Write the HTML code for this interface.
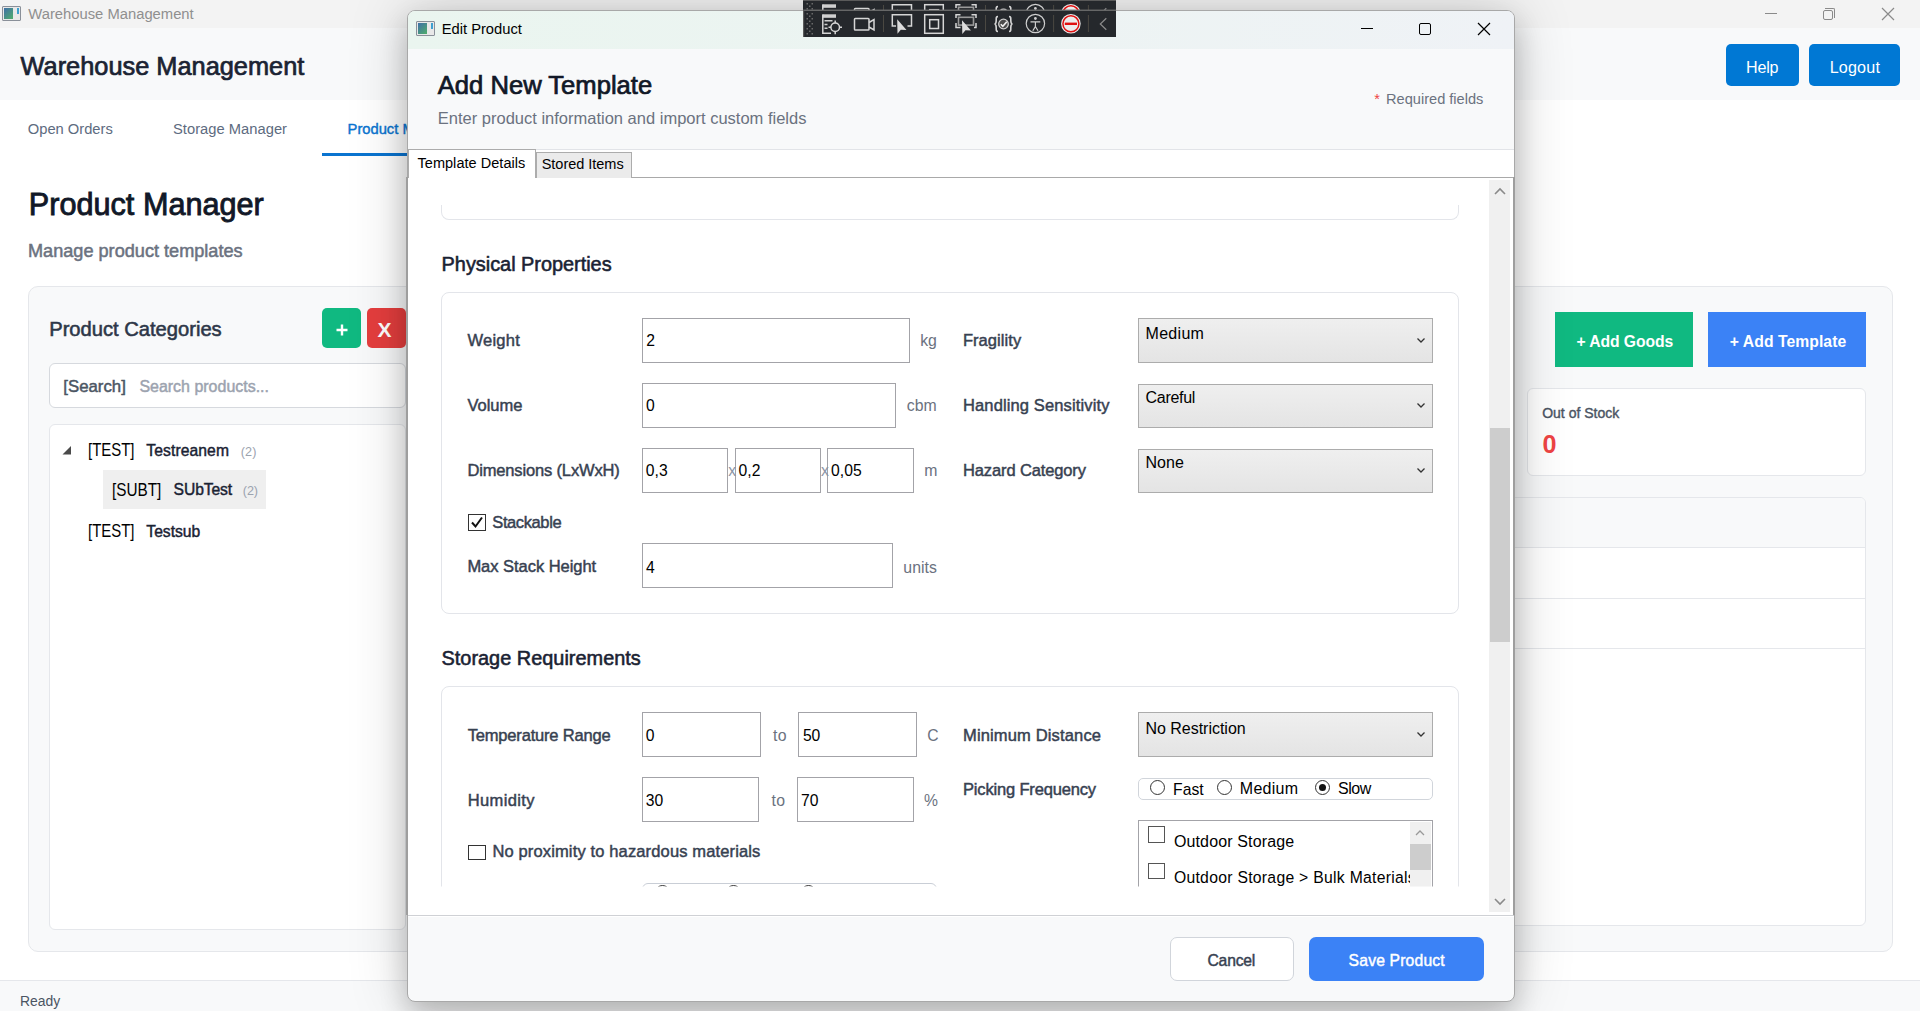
<!DOCTYPE html>
<html><head><meta charset="utf-8">
<style>
*{box-sizing:border-box;margin:0;padding:0}
html,body{width:1920px;height:1011px;overflow:hidden;background:#fff;font-family:"Liberation Sans",sans-serif;position:relative}
.abs{position:absolute}
.tx{position:absolute;white-space:nowrap;line-height:1;font-family:"Liberation Sans",sans-serif}
.inp{position:absolute;background:#fff;border:1px solid #a3a3a8}
.sel{position:absolute;background:linear-gradient(#efefef,#e4e4e4);border:1px solid #acacac}
.chev{position:absolute;width:6px;height:6px;border-right:1.3px solid #444;border-bottom:1.3px solid #444;transform:rotate(45deg)}
.card{position:absolute;background:#fff;border:1px solid #e3e5ea;border-radius:8px}
.cb{position:absolute;width:18px;height:17px;border:1px solid #333;background:#fff}
.rad{position:absolute;width:15px;height:15px;border:1px solid #333;border-radius:50%;background:#fff}
.tbicon{position:absolute}
</style></head><body>
<!-- ===== MAIN WINDOW ===== -->
<div class="abs" style="left:0;top:0;width:1920px;height:28px;background:#f3f3f3"></div>
<!-- app icon -->
<div class="abs" style="left:2px;top:6px;width:19px;height:15px;border:1px solid #8a9099;border-radius:1px;background:#e8e8e8"></div>
<div class="abs" style="left:4px;top:8px;width:9px;height:11px;background:linear-gradient(135deg,#3f6fa8,#4fae6a)"></div>
<div class="abs" style="left:17px;top:8px;width:2px;height:6px;background:#3da0d0"></div>
<!-- window controls -->
<div class="abs" style="left:1765px;top:13px;width:12px;height:1px;background:#8a8a8a"></div>
<div class="abs" style="left:1823px;top:10px;width:10px;height:10px;border:1.2px solid #8a8a8a;border-radius:2px"></div>
<div class="abs" style="left:1825px;top:8px;width:10px;height:10px;border-top:1.2px solid #8a8a8a;border-right:1.2px solid #8a8a8a;border-radius:0 2px 0 0"></div>
<svg class="abs" style="left:1881px;top:7px" width="14" height="14"><path d="M1 1L13 13M13 1L1 13" stroke="#8a8a8a" stroke-width="1.2"/></svg>

<div class="abs" style="left:0;top:28px;width:1920px;height:72px;background:#f8f9fa"></div>
<div class="abs" style="left:1725.5px;top:44px;width:73.5px;height:41.5px;background:#0078d4;border-radius:5px"></div>
<div class="abs" style="left:1809px;top:44px;width:91px;height:41.5px;background:#0078d4;border-radius:5px"></div>
<!-- nav underline -->
<div class="abs" style="left:322px;top:152.5px;width:200px;height:3.5px;background:#0a74d0"></div>

<!-- big panel -->
<div class="abs" style="left:28px;top:286px;width:1864.5px;height:666px;background:#f8f9fa;border:1px solid #e5e7eb;border-radius:10px"></div>
<div class="abs" style="left:321.5px;top:307.5px;width:39.5px;height:40px;background:#10b981;border-radius:5px"></div>
<div class="abs" style="left:366.5px;top:307.5px;width:39.5px;height:40px;background:#e53e3e;border-radius:5px"></div>
<div class="abs" style="left:49px;top:363px;width:357px;height:44.5px;background:#fff;border:1px solid #d6d9de;border-radius:6px"></div>
<div class="abs" style="left:49px;top:423.5px;width:357px;height:506.5px;background:#fff;border:1px solid #e5e7eb;border-radius:6px"></div>
<div class="abs" style="left:103px;top:470px;width:163px;height:38.5px;background:#efefef"></div>
<svg class="abs" style="left:62px;top:446px" width="10" height="9"><path d="M9 0L9 8.5L0.5 8.5Z" fill="#4a4a4a"/></svg>
<svg class="abs" style="left:331.5px;top:319.75px" width="20" height="20"><path d="M10 4.5V15.5M4.5 10H15.5" stroke="#fff" stroke-width="2.4"/></svg>
<div class="tx" style="left:377.5px;top:319px;font-size:21px;font-weight:bold;color:#fff;">X</div>

<!-- right side -->
<div class="abs" style="left:1555px;top:312px;width:138px;height:54.5px;background:#10b981"></div>
<div class="abs" style="left:1708px;top:312px;width:158px;height:54.5px;background:#3b82f6"></div>
<div class="abs" style="left:1526.5px;top:387.5px;width:339.5px;height:88px;background:#fff;border:1px solid #e5e7eb;border-radius:6px"></div>
<div class="abs" style="left:1300px;top:496.5px;width:566px;height:429px;background:#fff;border:1px solid #e5e7eb;border-radius:6px;overflow:hidden">
  <div class="abs" style="left:0;top:0;width:100%;height:50.5px;background:#f8f9fa;border-bottom:1px solid #e5e7eb"></div>
  <div class="abs" style="left:0;top:100px;width:100%;height:1px;background:#e5e7eb"></div>
  <div class="abs" style="left:0;top:150px;width:100%;height:1px;background:#e5e7eb"></div>
</div>

<!-- status bar -->
<div class="abs" style="left:0;top:980px;width:1920px;height:31px;background:#f8f9fa;border-top:1px solid #e5e7eb"></div>

<span class="tx" id="tb_title" style="left:28.30px;top:7.43px;font-size:14.79px;color:#8f8f8f;letter-spacing:-0.002px;">Warehouse Management</span>
<span class="tx" id="hdr_title" style="left:20.60px;top:53.54px;font-size:25.36px;color:#1b2333;-webkit-text-stroke:0.71px #1b2333;letter-spacing:-0.006px;">Warehouse Management</span>
<span class="tx" id="help" style="left:1746.00px;top:59.11px;font-size:16.11px;color:#ffffff;letter-spacing:-0.214px;">Help</span>
<span class="tx" id="logout" style="left:1829.70px;top:59.11px;font-size:16.11px;color:#ffffff;letter-spacing:0.184px;">Logout</span>
<span class="tx" id="nav1" style="left:27.80px;top:121.68px;font-size:14.73px;color:#5d6b80;letter-spacing:-0.009px;">Open Orders</span>
<span class="tx" id="nav2" style="left:173.00px;top:121.68px;font-size:14.73px;color:#5d6b80;letter-spacing:0.019px;">Storage Manager</span>
<span class="tx" id="nav3" style="left:347.60px;top:121.68px;font-size:14.73px;color:#0a74d0;-webkit-text-stroke:0.41px #0a74d0;">Product Manager</span>
<span class="tx" id="pm_title" style="left:28.80px;top:189.26px;font-size:30.64px;color:#111827;-webkit-text-stroke:0.86px #111827;letter-spacing:0.006px;">Product Manager</span>
<span class="tx" id="pm_sub" style="left:28.00px;top:241.58px;font-size:18.14px;color:#6b7280;-webkit-text-stroke:0.51px #6b7280;">Manage product templates</span>
<span class="tx" id="pc_title" style="left:49.20px;top:319.11px;font-size:20.16px;color:#2d3748;-webkit-text-stroke:0.56px #2d3748;letter-spacing:-0.003px;">Product Categories</span>
<span class="tx" id="srch1" style="left:63.30px;top:378.73px;font-size:16.79px;color:#4b5563;-webkit-text-stroke:0.47px #4b5563;">[Search]</span>
<span class="tx" id="srch2" style="left:139.40px;top:379.42px;font-size:15.98px;color:#9ca3af;-webkit-text-stroke:0.45px #9ca3af;">Search products...</span>
<span class="tx" id="tr1a" style="left:87.50px;top:441.40px;font-size:18.00px;color:#000000;transform:scaleX(0.83);transform-origin:0 0;">[TEST]</span>
<span class="tx" id="tr1b" style="left:146.30px;top:442.67px;font-size:15.68px;color:#1a2233;-webkit-text-stroke:0.44px #1a2233;letter-spacing:0.090px;">Testreanem</span>
<span class="tx" id="tr1c" style="left:240.70px;top:446.26px;font-size:12.63px;color:#9ca3af;letter-spacing:0.131px;">(2)</span>
<span class="tx" id="tr2a" style="left:111.50px;top:480.70px;font-size:18.00px;color:#000000;transform:scaleX(0.85);transform-origin:0 0;">[SUBT]</span>
<span class="tx" id="tr2b" style="left:173.60px;top:482.17px;font-size:15.68px;color:#1a2233;-webkit-text-stroke:0.44px #1a2233;letter-spacing:-0.106px;">SUbTest</span>
<span class="tx" id="tr2c" style="left:242.80px;top:485.26px;font-size:12.63px;color:#9ca3af;letter-spacing:-0.119px;">(2)</span>
<span class="tx" id="tr3a" style="left:87.50px;top:522.40px;font-size:18.00px;color:#000000;transform:scaleX(0.83);transform-origin:0 0;">[TEST]</span>
<span class="tx" id="tr3b" style="left:146.30px;top:523.67px;font-size:15.68px;color:#1a2233;-webkit-text-stroke:0.44px #1a2233;letter-spacing:-0.003px;">Testsub</span>
<span class="tx" id="addg" style="left:1576.40px;top:334.15px;font-size:15.71px;color:#ffffff;font-weight:bold;letter-spacing:-0.076px;">+ Add Goods</span>
<span class="tx" id="addt" style="left:1729.80px;top:334.15px;font-size:15.71px;color:#ffffff;font-weight:bold;letter-spacing:0.060px;">+ Add Template</span>
<span class="tx" id="oos" style="left:1542.20px;top:406.30px;font-size:14.00px;color:#4b5563;-webkit-text-stroke:0.39px #4b5563;letter-spacing:-0.004px;">Out of Stock</span>
<span class="tx" id="oos0" style="left:1542.50px;top:432.28px;font-size:25.20px;color:#ef4444;font-weight:bold;">0</span>
<span class="tx" id="ready" style="left:20.00px;top:994.88px;font-size:13.91px;color:#4b5563;letter-spacing:-0.001px;">Ready</span>

<!-- ===== DIALOG ===== -->
<div class="abs" id="dlg" style="left:407px;top:10px;width:1108px;height:991.5px;border-radius:8px;background:#f8f9fa;border:1px solid #a8a8a8;box-shadow:0 0 60px rgba(0,0,0,0.19), 0 14px 28px rgba(0,0,0,0.2);overflow:hidden">
  <div class="abs" style="left:0;top:0;width:100%;height:38px;background:linear-gradient(90deg,#eaf5ef 0%,#ecf4f2 45%,#eff2f6 100%)"></div>
  <div class="abs" style="left:0;top:138px;width:100%;height:1px;background:#e2e4e8"></div>
  <div class="abs" style="left:0;top:139px;width:100%;height:766.5px;background:#fff"></div>
  <div class="abs" style="left:0;top:904.3px;width:100%;height:1.2px;background:#cfd1d5"></div>
</div>
<!-- dialog app icon -->
<div class="abs" style="left:416px;top:21px;width:19px;height:15px;border:1px solid #8a9099;border-radius:1px;background:#e8e8e8"></div>
<div class="abs" style="left:418px;top:23px;width:9px;height:11px;background:linear-gradient(135deg,#3f6fa8,#4fae6a)"></div>
<div class="abs" style="left:431px;top:23px;width:2px;height:6px;background:#3da0d0"></div>
<!-- dialog controls -->
<div class="abs" style="left:1361px;top:28px;width:12px;height:1.2px;background:#000"></div>
<div class="abs" style="left:1419px;top:23px;width:12px;height:12px;border:1.2px solid #000;border-radius:2px"></div>
<svg class="abs" style="left:1477px;top:22px" width="14" height="14"><path d="M1 1L13 13M13 1L1 13" stroke="#000" stroke-width="1.2"/></svg>

<!-- tabs -->
<div class="abs" style="left:631px;top:176.5px;width:884px;height:1.5px;background:#a9a9a9"></div>
<div class="abs" style="left:535.5px;top:152px;width:96px;height:25.5px;background:#ebebeb;border:1px solid #acacac;border-bottom:none"></div>
<div class="abs" style="left:407.5px;top:149px;width:128px;height:29px;background:#fff;border:1px solid #acacac;border-bottom:none"></div>
<!-- content borders -->
<div class="abs" style="left:406.3px;top:177px;width:1.8px;height:738px;background:#9e9e9e"></div>
<div class="abs" style="left:1513.2px;top:177px;width:1.8px;height:738px;background:#9e9e9e"></div>

<!-- scrollbar -->
<div class="abs" style="left:1489px;top:180px;width:21px;height:731.5px;background:#f0f0f0"></div>
<div class="abs" style="left:1490px;top:428px;width:20px;height:214px;background:#cdcdcd"></div>
<svg class="abs" style="left:1493px;top:186px" width="14" height="10"><path d="M2 8L7 3L12 8" stroke="#8a8a8a" stroke-width="1.6" fill="none"/></svg>
<svg class="abs" style="left:1493px;top:897px" width="14" height="10"><path d="M2 2L7 7L12 2" stroke="#8a8a8a" stroke-width="1.6" fill="none"/></svg>

<!-- scroll content (clipped) -->
<div class="abs" style="left:0;top:0;width:1920px;height:1011px;clip-path:inset(178px 431px 124.5px 408px)">
  <div class="card" style="left:441px;top:205px;width:1018px;height:15px;border-top:none;border-radius:0 0 8px 8px"></div>
  <div class="card" style="left:441px;top:292px;width:1018px;height:322px"></div>
  <div class="card" style="left:441px;top:686px;width:1018px;height:300px"></div>
  <!-- physical inputs -->
  <div class="inp" style="left:642px;top:318px;width:267.5px;height:44.5px"></div>
  <div class="inp" style="left:642px;top:383px;width:253.5px;height:44.5px"></div>
  <div class="inp" style="left:642px;top:448px;width:86px;height:44.5px"></div>
  <div class="inp" style="left:735px;top:448px;width:86px;height:44.5px"></div>
  <div class="inp" style="left:827px;top:448px;width:86.5px;height:44.5px"></div>
  <div class="inp" style="left:642px;top:543px;width:250.5px;height:44.5px"></div>
  <div class="sel" style="left:1138px;top:318px;width:294.5px;height:44.5px"></div>
  <div class="sel" style="left:1138px;top:383.5px;width:294.5px;height:44.5px"></div>
  <div class="sel" style="left:1138px;top:448.5px;width:294.5px;height:44.5px"></div>
  <svg class="abs" style="left:1416px;top:337px" width="10" height="7"><path d="M1.5 1.5L5 5L8.5 1.5" stroke="#333" stroke-width="1.3" fill="none"/></svg>
  <svg class="abs" style="left:1416px;top:402px" width="10" height="7"><path d="M1.5 1.5L5 5L8.5 1.5" stroke="#333" stroke-width="1.3" fill="none"/></svg>
  <svg class="abs" style="left:1416px;top:467px" width="10" height="7"><path d="M1.5 1.5L5 5L8.5 1.5" stroke="#333" stroke-width="1.3" fill="none"/></svg>
  <div class="cb" style="left:468px;top:514px"></div>
  <svg class="abs" style="left:468px;top:514px" width="18" height="17"><path d="M4 8.5L7.5 12.5L14 3.5" stroke="#111" stroke-width="2" fill="none"/></svg>
  <!-- storage -->
  <div class="inp" style="left:642px;top:712px;width:118.5px;height:44.5px"></div>
  <div class="inp" style="left:798px;top:712px;width:118.5px;height:44.5px"></div>
  <div class="inp" style="left:642px;top:777px;width:116.5px;height:44.5px"></div>
  <div class="inp" style="left:797px;top:777px;width:116.5px;height:44.5px"></div>
  <div class="cb" style="left:468px;top:844.5px;width:17.5px;height:15px"></div>
  <div class="abs" style="left:642px;top:882.7px;width:295px;height:30px;border:1px solid #c9ced6;border-radius:6px;background:#fff"></div>
  <div class="rad" style="left:654.5px;top:884.8px"></div>
  <div class="rad" style="left:726px;top:884.8px"></div>
  <div class="rad" style="left:801px;top:884.8px"></div>
  <div class="sel" style="left:1138px;top:712px;width:294.5px;height:44.5px"></div>
  <svg class="abs" style="left:1416px;top:731px" width="10" height="7"><path d="M1.5 1.5L5 5L8.5 1.5" stroke="#333" stroke-width="1.3" fill="none"/></svg>
  <div class="abs" style="left:1138px;top:777.5px;width:294.5px;height:22px;border:1px solid #d1d5db;border-radius:5px;background:#fff"></div>
  <div class="rad" style="left:1150px;top:780px"></div>
  <div class="rad" style="left:1217px;top:780px"></div>
  <div class="rad" style="left:1315px;top:780px"></div>
  <div class="abs" style="left:1319px;top:784px;width:7px;height:7px;border-radius:50%;background:#111"></div>
  <div class="abs" style="left:1138px;top:820px;width:294.5px;height:120px;border:1px solid #a3a3a8;background:#fff"></div>
  <div class="abs" style="left:1410px;top:822px;width:21px;height:110px;background:#f0f0f0"></div>
  <div class="abs" style="left:1410px;top:844px;width:21px;height:26px;background:#cdcdcd"></div>
  <svg class="abs" style="left:1414px;top:829px" width="12" height="8"><path d="M2 6L6 2L10 6" stroke="#999" stroke-width="1.3" fill="none"/></svg>
  <div class="cb" style="left:1148px;top:826px;width:17px;height:16.5px;border-color:#555"></div>
  <div class="cb" style="left:1148px;top:863px;width:17px;height:16px;border-color:#555"></div>
<span class="tx" id="sec1" style="left:441.60px;top:255.09px;font-size:19.90px;color:#1a2233;-webkit-text-stroke:0.56px #1a2233;letter-spacing:-0.014px;">Physical Properties</span>
<span class="tx" id="l_weight" style="left:467.40px;top:332.76px;font-size:16.52px;color:#374151;-webkit-text-stroke:0.46px #374151;letter-spacing:0.278px;">Weight</span>
<span class="tx" id="l_volume" style="left:467.40px;top:397.76px;font-size:16.52px;color:#374151;-webkit-text-stroke:0.46px #374151;letter-spacing:-0.019px;">Volume</span>
<span class="tx" id="l_dim" style="left:467.40px;top:462.76px;font-size:16.52px;color:#374151;-webkit-text-stroke:0.46px #374151;letter-spacing:-0.158px;">Dimensions (LxWxH)</span>
<span class="tx" id="l_stack" style="left:492.30px;top:515.26px;font-size:16.52px;color:#374151;-webkit-text-stroke:0.46px #374151;letter-spacing:-0.404px;">Stackable</span>
<span class="tx" id="l_msh" style="left:467.40px;top:559.16px;font-size:16.52px;color:#374151;-webkit-text-stroke:0.46px #374151;letter-spacing:-0.042px;">Max Stack Height</span>
<span class="tx" id="l_frag" style="left:962.90px;top:333.46px;font-size:16.52px;color:#374151;-webkit-text-stroke:0.46px #374151;letter-spacing:0.059px;">Fragility</span>
<span class="tx" id="l_hand" style="left:963.00px;top:398.36px;font-size:16.52px;color:#374151;-webkit-text-stroke:0.46px #374151;letter-spacing:0.120px;">Handling Sensitivity</span>
<span class="tx" id="l_haz" style="left:963.00px;top:463.06px;font-size:16.52px;color:#374151;-webkit-text-stroke:0.46px #374151;letter-spacing:-0.132px;">Hazard Category</span>
<span class="tx" id="v_w" style="left:646.30px;top:333.46px;font-size:15.70px;color:#000;">2</span>
<span class="tx" id="v_v" style="left:646.00px;top:398.46px;font-size:15.70px;color:#000;">0</span>
<span class="tx" id="v_d1" style="left:645.80px;top:463.46px;font-size:15.70px;color:#000;">0,3</span>
<span class="tx" id="v_d2" style="left:738.60px;top:463.46px;font-size:15.70px;color:#000;">0,2</span>
<span class="tx" id="v_d3" style="left:831.10px;top:463.46px;font-size:15.70px;color:#000;">0,05</span>
<span class="tx" id="v_msh" style="left:646.00px;top:559.65px;font-size:15.70px;color:#000;">4</span>
<span class="tx" id="u_kg" style="left:920.20px;top:333.34px;font-size:15.83px;color:#6b7280;letter-spacing:-0.119px;">kg</span>
<span class="tx" id="u_cbm" style="left:906.70px;top:398.34px;font-size:15.83px;color:#6b7280;letter-spacing:0.047px;">cbm</span>
<span class="tx" id="u_m" style="left:924.30px;top:462.94px;font-size:15.83px;color:#6b7280;">m</span>
<span class="tx" id="u_units" style="left:903.30px;top:559.54px;font-size:15.83px;color:#6b7280;letter-spacing:0.066px;">units</span>
<span class="tx" id="x1" style="left:728.30px;top:463.46px;font-size:15.70px;color:#8a94a6;">x</span>
<span class="tx" id="x2" style="left:821.00px;top:463.46px;font-size:15.70px;color:#8a94a6;">x</span>
<span class="tx" id="s_med" style="left:1145.50px;top:326.00px;font-size:16.00px;color:#000;letter-spacing:0.299px;">Medium</span>
<span class="tx" id="s_car" style="left:1145.50px;top:390.30px;font-size:16.00px;color:#000;letter-spacing:-0.280px;">Careful</span>
<span class="tx" id="s_non" style="left:1145.50px;top:455.20px;font-size:16.00px;color:#000;letter-spacing:0.050px;">None</span>
<span class="tx" id="sec2" style="left:441.50px;top:648.88px;font-size:19.90px;color:#1a2233;-webkit-text-stroke:0.56px #1a2233;letter-spacing:0.015px;">Storage Requirements</span>
<span class="tx" id="l_temp" style="left:467.70px;top:727.66px;font-size:16.52px;color:#374151;-webkit-text-stroke:0.46px #374151;letter-spacing:-0.187px;">Temperature Range</span>
<span class="tx" id="l_hum" style="left:467.70px;top:792.76px;font-size:16.52px;color:#374151;-webkit-text-stroke:0.46px #374151;letter-spacing:0.379px;">Humidity</span>
<span class="tx" id="v_t0" style="left:645.80px;top:728.36px;font-size:15.70px;color:#000;">0</span>
<span class="tx" id="v_t50" style="left:802.90px;top:728.36px;font-size:15.70px;color:#000;">50</span>
<span class="tx" id="v_h30" style="left:645.80px;top:793.45px;font-size:15.70px;color:#000;">30</span>
<span class="tx" id="v_h70" style="left:801.00px;top:793.45px;font-size:15.70px;color:#000;">70</span>
<span class="tx" id="u_to1" style="left:773.00px;top:728.04px;font-size:15.83px;color:#6b7280;letter-spacing:0.297px;">to</span>
<span class="tx" id="u_to2" style="left:771.60px;top:793.04px;font-size:15.83px;color:#6b7280;letter-spacing:0.297px;">to</span>
<span class="tx" id="u_c" style="left:927.30px;top:728.36px;font-size:15.70px;color:#6b7280;">C</span>
<span class="tx" id="u_pct" style="left:924.00px;top:793.45px;font-size:15.70px;color:#6b7280;">%</span>
<span class="tx" id="l_prox" style="left:492.40px;top:844.26px;font-size:16.52px;color:#374151;-webkit-text-stroke:0.46px #374151;letter-spacing:0.134px;">No proximity to hazardous materials</span>
<span class="tx" id="l_mind" style="left:963.00px;top:727.86px;font-size:16.52px;color:#374151;-webkit-text-stroke:0.46px #374151;letter-spacing:0.145px;">Minimum Distance</span>
<span class="tx" id="l_pick" style="left:963.00px;top:782.26px;font-size:16.52px;color:#374151;-webkit-text-stroke:0.46px #374151;letter-spacing:-0.179px;">Picking Frequency</span>
<span class="tx" id="s_nores" style="left:1145.40px;top:721.00px;font-size:16.00px;color:#000;letter-spacing:-0.014px;">No Restriction</span>
<span class="tx" id="r_fast" style="left:1173.10px;top:781.65px;font-size:15.70px;color:#000;">Fast</span>
<span class="tx" id="r_med" style="left:1239.80px;top:781.40px;font-size:16.00px;color:#000;letter-spacing:0.259px;">Medium</span>
<span class="tx" id="r_slow" style="left:1338.00px;top:781.40px;font-size:16.00px;color:#000;letter-spacing:-0.463px;">Slow</span>
<span class="tx" id="li1" style="left:1173.90px;top:833.80px;font-size:16.00px;color:#000;letter-spacing:0.143px;">Outdoor Storage</span>
<span class="tx" id="li2" style="left:1173.90px;top:869.62px;font-size:15.74px;color:#000;width:236px;overflow:hidden;height:20px;letter-spacing:0.283px;">Outdoor Storage &gt; Bulk Materials</span>
</div>

<!-- footer buttons -->
<div class="abs" style="left:1169.5px;top:937px;width:124px;height:43.5px;background:#fff;border:1px solid #d1d5db;border-radius:7px"></div>
<div class="abs" style="left:1309px;top:937px;width:175px;height:43.5px;background:#3b82f6;border-radius:7px"></div>

<span class="tx" id="dlg_title" style="left:441.70px;top:22.48px;font-size:14.73px;color:#000000;letter-spacing:0.001px;">Edit Product</span>
<span class="tx" id="dlg_h1" style="left:437.80px;top:73.23px;font-size:25.61px;color:#111827;-webkit-text-stroke:0.72px #111827;letter-spacing:-0.006px;">Add New Template</span>
<span class="tx" id="dlg_sub" style="left:437.80px;top:109.97px;font-size:16.51px;color:#6b7280;letter-spacing:-0.001px;">Enter product information and import custom fields</span>
<span class="tx" id="req_star" style="left:1374.20px;top:91.59px;font-size:14.60px;color:#ef4444;">*</span>
<span class="tx" id="req" style="left:1386.00px;top:91.59px;font-size:14.60px;color:#6b7280;letter-spacing:0.003px;">Required fields</span>
<span class="tx" id="tab1" style="left:417.50px;top:156.35px;font-size:14.53px;color:#000000;letter-spacing:0.032px;">Template Details</span>
<span class="tx" id="tab2" style="left:541.70px;top:157.45px;font-size:14.53px;color:#000000;letter-spacing:-0.027px;">Stored Items</span>
<span class="tx" id="cancel" style="left:1207.50px;top:952.76px;font-size:15.69px;color:#374151;-webkit-text-stroke:0.44px #374151;letter-spacing:-0.209px;">Cancel</span>
<span class="tx" id="save" style="left:1348.60px;top:952.76px;font-size:15.69px;color:#ffffff;-webkit-text-stroke:0.44px #ffffff;letter-spacing:0.174px;">Save Product</span>

<!-- ===== XAML TOOLBAR ===== -->
<div class="abs" style="left:803px;top:0;width:313px;height:36.5px;background:#25282c;overflow:hidden" id="tb">
  <svg class="abs" style="left:0;top:0" width="313" height="37">
    <defs><g id="tbg" fill="none" stroke="#d6d6d6" stroke-width="1.5">
  <!-- grip dots -->
  <g fill="#6a6a6a" stroke="none">
    <rect x="3.5" y="13" width="1.5" height="1.5"/><rect x="8.5" y="13" width="1.5" height="1.5"/>
    <rect x="6" y="15.5" width="1.5" height="1.5"/>
    <rect x="3.5" y="18" width="1.5" height="1.5"/><rect x="8.5" y="18" width="1.5" height="1.5"/>
    <rect x="6" y="20.5" width="1.5" height="1.5"/>
    <rect x="3.5" y="23" width="1.5" height="1.5"/><rect x="8.5" y="23" width="1.5" height="1.5"/>
    <rect x="6" y="25.5" width="1.5" height="1.5"/>
    <rect x="3.5" y="28" width="1.5" height="1.5"/><rect x="8.5" y="28" width="1.5" height="1.5"/>
    <rect x="6" y="30.5" width="1.5" height="1.5"/>
    <rect x="3.5" y="33" width="1.5" height="1.5"/><rect x="8.5" y="33" width="1.5" height="1.5"/>
  </g>
  <!-- icon1: tree w/ crosshair (origin 822,14) -->
  <rect x="19.5" y="14.3" width="13.5" height="3.5" fill="#d0d0d0" stroke="none"/>
  <path d="M19.8 14.5V33.3H28"/>
  <path d="M21.5 20.8H29.5M21.5 24.5H24.5M21.5 28.3H24.5" stroke="#cfcfcf"/>
  <circle cx="32.2" cy="27.2" r="4.3"/>
  <path d="M32.2 20.5V23M32.2 31.5V34.2M25.5 27.2H28M36.5 27.2H39"/>
  <!-- icon2: camera -->
  <rect x="51.5" y="18.5" width="14.5" height="11.5" rx="0.8"/>
  <path d="M66 22.5L71 19.5V30L66 27"/>
  <!-- sep -->
  <path d="M80.5 15V32" stroke="#4a4842" stroke-width="1"/>
  <!-- icon3: select element -->
  <path d="M93 26H89.3V14.7H108.5V26H104.5"/>
  <path d="M94.2 19.2L94.5 33.8L97.8 29.8L103.5 30Z" fill="#dcdcdc" stroke="none"/>
  <!-- icon4: nested squares -->
  <rect x="121.7" y="14.7" width="18.6" height="18.6"/>
  <rect x="126.7" y="19.7" width="8.8" height="8.8"/>
  <!-- icon5: bracket select -->
  <path d="M153 18V14.7H157.5M168.5 14.7H173V18M153 23V27.5H157.5M173 23V27.5H171" />
  <rect x="155.5" y="17.3" width="15" height="7.8" stroke="#9a9a9a" stroke-width="1.6"/>
  <path d="M159 20.3L159.3 34L162.5 30.3L168 30.5Z" fill="#dcdcdc" stroke="none"/>
  <!-- sep -->
  <path d="M182.5 15V32" stroke="#4a4842" stroke-width="1"/>
  <!-- icon6: {check} -->
  <path d="M195 16.5C193 16.5 193.2 18 193.2 20.5C193.2 22.8 192.8 23.8 191.6 24C192.8 24.2 193.2 25.2 193.2 27.5C193.2 30 193 31.5 195 31.5" stroke-width="1.6"/>
  <path d="M206 16.5C208 16.5 207.8 18 207.8 20.5C207.8 22.8 208.2 23.8 209.4 24C208.2 24.2 207.8 25.2 207.8 27.5C207.8 30 208 31.5 206 31.5" stroke-width="1.6"/>
  <circle cx="200.5" cy="24" r="4.8" fill="#4a4a4a" stroke="#cfcfcf" stroke-width="1.3"/>
  <path d="M197.8 24.3L199.8 26.3L203.8 21.8" stroke="#f0f0f0" stroke-width="1.6"/>
  <!-- icon7: accessibility -->
  <circle cx="232.4" cy="23.5" r="9.2" stroke="#cfcfcf" stroke-width="1.2"/>
  <circle cx="232.4" cy="18.5" r="1.4" fill="#cfcfcf" stroke="none"/>
  <path d="M227.5 21.8H237.3M232.4 21.8V26.5L229.8 30.8M232.4 26.5L235 30.8" stroke="#cfcfcf" stroke-width="1.2"/>
  <!-- sep -->
  <path d="M250.6 15V32" stroke="#4a4842" stroke-width="1"/>
  <!-- icon8: red minus -->
  <circle cx="267.9" cy="23.8" r="9.8" fill="#ececec" stroke="none"/>
  <circle cx="267.9" cy="23.8" r="8" stroke="#e01010" stroke-width="1.5"/>
  <rect x="261.8" y="22.6" width="12.2" height="2.4" fill="#e01010" stroke="none"/>
  <!-- sep -->
  <path d="M285.4 15V32" stroke="#4a4842" stroke-width="1"/>
  <!-- chevron -->
  <path d="M103.3 0" stroke="none"/>
  <path d="M303.3 18.3L297.3 24L303.3 29.8" stroke="#8a8a8a" stroke-width="1.2"/>
</g>
<clipPath id="stripclip"><rect x="0" y="0" width="313" height="10"/></clipPath></defs>
    <use href="#tbg"/>
    <rect x="0" y="0" width="313" height="10" fill="#25282c"/>
    <g clip-path="url(#stripclip)"><use href="#tbg" transform="translate(0,-10)"/></g>
    <rect x="0" y="0" width="313" height="1" fill="#5a5a5a"/>
    <rect x="0" y="9.6" width="313" height="1.3" fill="#6e6e6e"/>
    <rect x="0" y="10" width="1.2" height="27" fill="#5a5a5a"/>
  </svg>
</div>
</body></html>
